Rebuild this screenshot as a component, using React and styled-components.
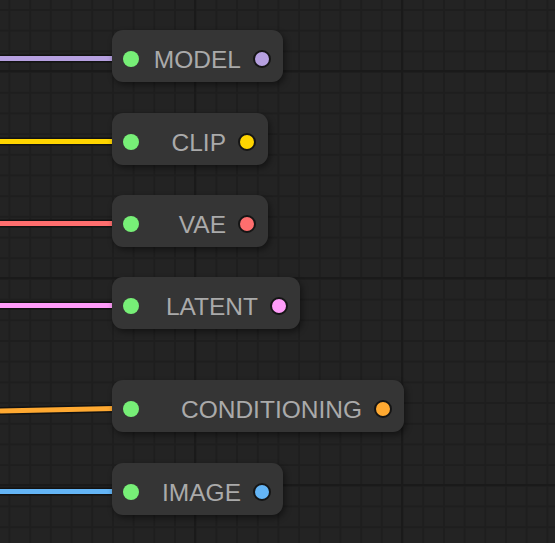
import React from "react";
import styled, { createGlobalStyle } from "styled-components";

const GlobalStyle = createGlobalStyle`
  html, body {
    margin: 0;
    padding: 0;
    background: #232323;
  }
`;

const Canvas = styled.div`
  position: relative;
  width: 555px;
  height: 543px;
  overflow: hidden;
  background-color: #232323;
  background-image:
    linear-gradient(90deg, #1a1a1a 0 2px, transparent 2px),
    linear-gradient(180deg, #1a1a1a 0 2px, transparent 2px),
    linear-gradient(90deg, #1e1e1e 0 1.5px, transparent 1.5px),
    linear-gradient(180deg, #1e1e1e 0 1.5px, transparent 1.5px);
  background-size: 207px 207px, 207px 207px, 20.7px 20.7px, 20.7px 20.7px;
  background-position: 194px 70px, 194px 70px, 8.5px 9px, 8.5px 9px;
  font-family: "Liberation Sans", Arial, sans-serif;
`;

const Wires = styled.svg`
  position: absolute;
  inset: 0;
  pointer-events: none;
`;

const Node = styled.div`
  position: absolute;
  left: 112px;
  height: 52px;
  box-sizing: border-box;
  display: flex;
  align-items: center;
  padding: 5px 12px 0 11px;
  background: #353535;
  border-radius: 11px;
  box-shadow: 2px 3px 6px rgba(0, 0, 0, 0.45);
`;

const InDot = styled.span`
  flex: none;
  width: 16px;
  height: 16px;
  border-radius: 50%;
  background: #77ef77;
`;

const Label = styled.span`
  flex: 1;
  padding-top: 4px;
  margin-right: 12px;
  text-align: right;
  font-size: 24.5px;
  line-height: 1;
  color: #aaaaaa;
  white-space: nowrap;
`;

const OutDot = styled.span`
  flex: none;
  box-sizing: border-box;
  width: 18px;
  height: 18px;
  border-radius: 50%;
  border: 2px solid #151515;
  background: ${(p) => p.$color};
`;

const nodes = [
  { name: "MODEL", top: 30, width: 171, color: "#b6a0e0" },
  { name: "CLIP", top: 113, width: 156, color: "#ffd500" },
  { name: "VAE", top: 195, width: 156, color: "#ff6e6e" },
  { name: "LATENT", top: 277, width: 188, color: "#ff9cf9" },
  { name: "CONDITIONING", top: 380, width: 292, color: "#ffa931", tilt: 2.5 },
  { name: "IMAGE", top: 463, width: 171, color: "#64b5f6" },
];

export default function App() {
  return (
    <>
      <GlobalStyle />
      <Canvas>
        <Wires width="555" height="543">
          {nodes.map((n) => {
            const y = n.top + 28.5;
            const d = `M0 ${y + (n.tilt || 0)} L114 ${y}`;
            return (
              <g key={n.name}>
                <path d={d} stroke="#121212" strokeWidth="8" fill="none" />
                <path d={d} stroke={n.color} strokeWidth="5" fill="none" />
              </g>
            );
          })}
        </Wires>
        {nodes.map((n) => (
          <Node key={n.name} style={{ top: n.top, width: n.width }}>
            <InDot />
            <Label>{n.name}</Label>
            <OutDot $color={n.color} />
          </Node>
        ))}
      </Canvas>
    </>
  );
}
